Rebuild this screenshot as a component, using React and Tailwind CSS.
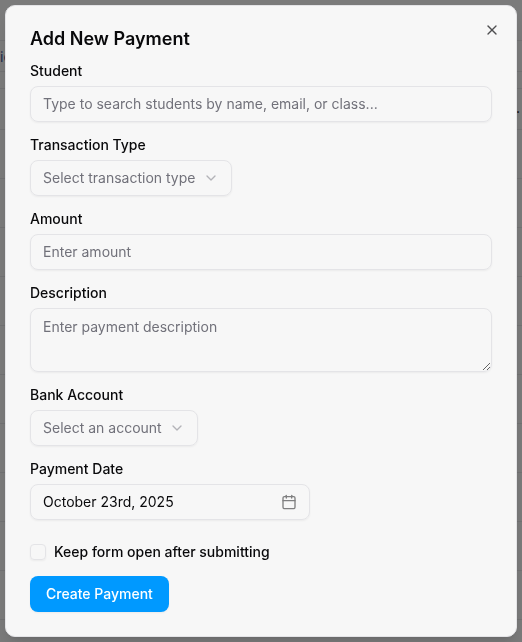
import { useState } from "react";
import { Calendar, ChevronDown, X } from "lucide-react";

const rows = [1, 2, 3, 4, 5, 6, 7, 8, 9, 10];

const fieldStyles =
  "rounded-lg border border-[#e4e4e7] bg-transparent px-3 text-sm text-[#09090b] shadow-xs outline-none placeholder:text-[#71717a]";

function Field({ id, label, children }) {
  return (
    <div className="grid gap-2 justify-items-start">
      <label htmlFor={id} className="text-sm leading-[14px] font-medium">
        {label}
      </label>
      {children}
    </div>
  );
}

function SelectBox({ id, placeholder }) {
  return (
    <div className="relative">
      <select
        id={id}
        className="h-9 appearance-none rounded-lg border border-[#e4e4e7] bg-transparent pl-3 pr-[35px] text-sm text-[#71717a] shadow-xs outline-none"
      >
        <option value="">{placeholder}</option>
      </select>
      <ChevronDown className="pointer-events-none absolute right-[13px] top-[10px] size-4 text-[#71717a] opacity-50" />
    </div>
  );
}

function PaymentsPage() {
  return (
    <div className="fixed inset-0 overflow-hidden bg-[#f7f7f7]" aria-hidden="true">
      <div className="mt-10 h-8 border-y border-[#e4e4e7] text-sm leading-8 text-[#3b5998]">
        ie
      </div>
      <div className="mt-4 h-[42px] border-y border-[#e4e4e7] pr-0.5 text-right text-sm leading-[38px]">
        .
      </div>
      {rows.map((row) => (
        <div key={row} className="h-[49px] border-b border-[#e4e4e7]" />
      ))}
    </div>
  );
}

export default function App() {
  const [student, setStudent] = useState("");
  const [amount, setAmount] = useState("");
  const [description, setDescription] = useState("");
  const [keepOpen, setKeepOpen] = useState(false);

  return (
    <div className="font-['Inter',sans-serif] text-[#09090b]">
      <PaymentsPage />
      <div className="fixed inset-0 bg-black/50" />
      <div className="relative flex min-h-screen items-center justify-center">
        <div
          role="dialog"
          aria-labelledby="payment-title"
          className="relative grid w-full max-w-lg gap-4 rounded-[10px] border border-[#e4e4e7] bg-[#f7f7f7] p-6 shadow-lg"
        >
          <h2
            id="payment-title"
            className="text-lg leading-[18px] font-semibold"
          >
            Add New Payment
          </h2>
          <form
            className="grid gap-4"
            onSubmit={(ev) => ev.preventDefault()}
          >
            <Field id="student" label="Student">
              <input
                id="student"
                type="text"
                value={student}
                onChange={(ev) => setStudent(ev.target.value)}
                placeholder="Type to search students by name, email, or class..."
                className={`h-9 w-full pb-0.5 ${fieldStyles}`}
              />
            </Field>
            <Field id="type" label="Transaction Type">
              <SelectBox id="type" placeholder="Select transaction type" />
            </Field>
            <Field id="amount" label="Amount">
              <input
                id="amount"
                type="text"
                value={amount}
                onChange={(ev) => setAmount(ev.target.value)}
                placeholder="Enter amount"
                className={`h-9 w-full pb-0.5 ${fieldStyles}`}
              />
            </Field>
            <Field id="description" label="Description">
              <textarea
                id="description"
                value={description}
                onChange={(ev) => setDescription(ev.target.value)}
                placeholder="Enter payment description"
                className={`block h-16 w-full py-2 ${fieldStyles}`}
              />
            </Field>
            <Field id="account" label="Bank Account">
              <SelectBox id="account" placeholder="Select an account" />
            </Field>
            <Field id="date" label="Payment Date">
              <button
                id="date"
                type="button"
                className={`flex h-9 w-[280px] items-center justify-between ${fieldStyles}`}
              >
                October 23rd, 2025
                <Calendar className="size-4 opacity-50" />
              </button>
            </Field>
            <div className="flex items-center gap-2 pt-2">
              <input
                id="keep-open"
                type="checkbox"
                checked={keepOpen}
                onChange={(ev) => setKeepOpen(ev.target.checked)}
                className="size-4 appearance-none rounded-sm border border-[#e4e4e7] shadow-xs checked:bg-[#0099ff]"
              />
              <label
                htmlFor="keep-open"
                className="text-sm leading-[14px] font-medium"
              >
                Keep form open after submitting
              </label>
            </div>
            <button
              type="submit"
              className="h-9 justify-self-start rounded-lg bg-[#0099ff] px-4 text-sm font-medium text-white shadow-xs"
            >
              Create Payment
            </button>
          </form>
          <button
            type="button"
            aria-label="Close"
            className="absolute right-4 top-4 opacity-70"
          >
            <X className="size-4" />
          </button>
        </div>
      </div>
    </div>
  );
}
